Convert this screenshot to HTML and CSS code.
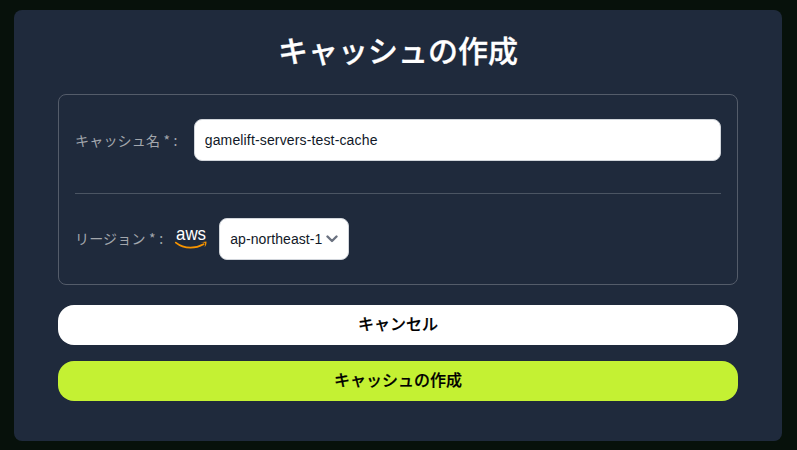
FILE: index.html
```html
<!DOCTYPE html>
<html lang="ja">
<head>
<meta charset="utf-8">
<title>キャッシュの作成</title>
<link rel="stylesheet" href="styles.css">
</head>
<body>
<main class="card">
  <h1 class="title">キャッシュの作成</h1>
  <section class="panel">
    <div class="row name-row">
      <label class="label" for="name">キャッシュ名 * :</label>
      <input class="text-input" id="name" type="text" value="gamelift-servers-test-cache">
    </div>
    <hr class="divider">
    <div class="row region-row">
      <label class="label region-label" for="region">リージョン * :</label>
      <svg class="aws" viewBox="0 0 32 24" width="32" height="24" aria-label="aws">
        <text class="aws-text" x="1" y="15" textLength="30" lengthAdjust="spacingAndGlyphs">aws</text>
        <path class="aws-smile" d="M0.8 17.6C5 21 10 22.6 15.5 22.6C20 22.6 25 21.2 28.6 19.2"/>
        <path class="aws-arrow" d="M26 17.2L31.4 16.4C31.8 18 31 20.8 29.6 22C29.8 20.6 30.4 19 30 18.2C29.6 17.6 27.6 17.4 26 17.2Z"/>
      </svg>
      <div class="select" id="region" role="button">
        <span>ap-northeast-1</span>
        <svg class="chev" viewBox="0 0 12 8" width="12" height="8"><path d="M1.5 1.5L6 6L10.5 1.5"/></svg>
      </div>
    </div>
  </section>
  <button class="btn btn-white" type="button">キャンセル</button>
  <button class="btn btn-lime" type="button">キャッシュの作成</button>
</main>
</body>
</html>
```
FILE: styles.css
```css
* { box-sizing: border-box; }
html, body { margin: 0; height: 100%; }
body {
  background: #07110b;
  padding: 10px 15px 9px 14px;
  font-family: "Liberation Sans", "Noto Sans CJK JP", sans-serif;
  overflow: hidden;
}
.card {
  height: 431px;
  background: #1f2a3c;
  border-radius: 8px;
  padding: 19px 44px 0;
  display: flex;
  flex-direction: column;
  will-change: opacity;
}
.title {
  margin: 0 0 24px;
  height: 41px;
  line-height: 41px;
  font-size: 30px;
  font-weight: 500;
  -webkit-text-stroke: 0.3px #fff;
  color: #fff;
  text-align: center;
  font-family: "Noto Sans CJK JP", sans-serif;
}
.panel {
  height: 191px;
  border: 1px solid #545c6a;
  border-radius: 8px;
  padding: 24px 16px 0;
  margin-bottom: 20px;
}
.row { display: flex; align-items: center; }
.name-row { height: 42px; gap: 16px; }
.region-row { height: 42px; }
.label {
  font-size: 14px;
  line-height: 20px;
  color: #a3a7ad;
  white-space: nowrap;
  font-family: "Noto Sans CJK JP", sans-serif;
  letter-spacing: 0.2px;
}
.region-label { margin-bottom: 2px; }
.text-input {
  flex: 1;
  min-width: 0;
  height: 42px;
  border: 1px solid #d1d5db;
  border-radius: 8px;
  background: #fff;
  padding: 0 10px;
  font: 14px "Liberation Sans", sans-serif;
  letter-spacing: 0.15px;
  color: #111827;
}
.divider {
  border: 0;
  border-top: 1px solid #4b5563;
  margin: 32px 0 24px;
}
.aws { margin: 0 11px 4px 12px; flex: none; overflow: visible; }
.aws-text { font: 400 19px "Liberation Sans", sans-serif; fill: #fff; }
.aws-smile { fill: none; stroke: #f79400; stroke-width: 1.8; stroke-linecap: round; }
.aws-arrow { fill: #f79400; }
.select {
  width: 130px;
  height: 42px;
  margin-left: 1px;
  background: #fff;
  border: 1px solid #d1d5db;
  border-radius: 8px;
  padding: 0 10px;
  display: flex;
  align-items: center;
  justify-content: space-between;
  font-size: 14px;
  letter-spacing: 0.08px;
  color: #111827;
  white-space: nowrap;
}
.chev { flex: none; }
.chev path { fill: none; stroke: #6b7280; stroke-width: 2.4; stroke-linecap: round; stroke-linejoin: round; }
.btn {
  display: block;
  width: 100%;
  height: 40px;
  border: 0;
  border-radius: 16px;
  font: 500 16px/36px "Noto Sans CJK JP", sans-serif;
  -webkit-text-stroke: 0.2px #000;
  color: #000;
  padding: 0 0 4px;
}
.btn-white { background: #fff; margin-bottom: 16px; }
.btn-lime { background: #c4f133; }
```
